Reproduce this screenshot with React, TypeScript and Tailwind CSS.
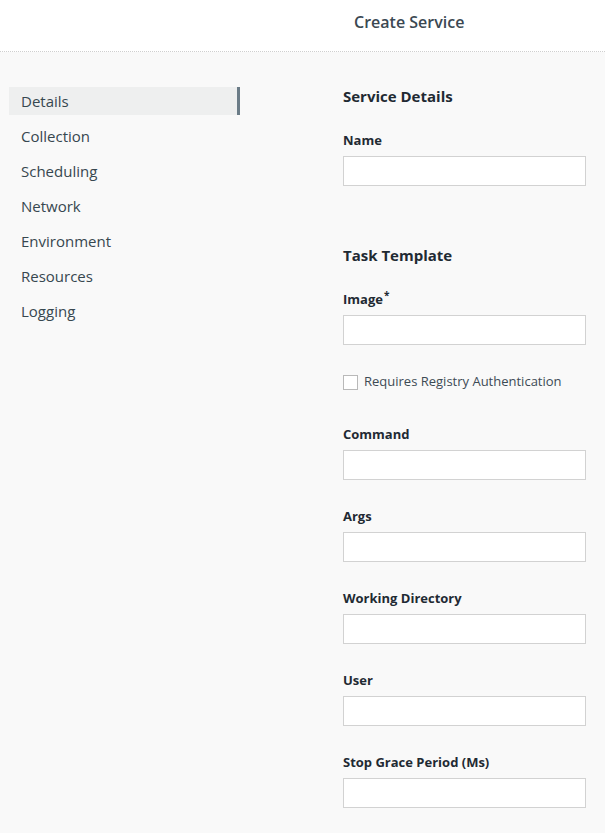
const navItems = [
  "Details",
  "Collection",
  "Scheduling",
  "Network",
  "Environment",
  "Resources",
  "Logging",
] as const;

const taskFields = [
  "Command",
  "Args",
  "Working Directory",
  "User",
  "Stop Grace Period (Ms)",
] as const;

function Field({ label, required }: { label: string; required?: boolean }) {
  return (
    <div className="flex flex-col">
      <label className="h-[18px] text-[13px] leading-[18px] font-bold text-[#1f2a33]">
        {label}
        {required && <sup className="ml-px text-[10px] font-bold">*</sup>}
      </label>
      <input
        type="text"
        className="mt-[7px] h-[30px] w-full border border-[#d2d2d2] bg-white px-2 text-[13px] outline-none"
      />
    </div>
  );
}

export default function App() {
  return (
    <div
      className="min-h-[833px] bg-[#f9f9f9] text-[#37474f]"
      style={{ fontFamily: '"Open Sans", "Noto Sans", sans-serif' }}
    >
      <header className="h-[52px] border-b border-dotted border-[#cfcfcf] bg-white pl-[354px] pt-[10px]">
        <h1 className="text-[16px] leading-[24px] font-semibold text-[#3b4852]">
          Create Service
        </h1>
      </header>

      <div className="flex">
        <nav className="mt-[35px] ml-[9px] flex w-[231px] flex-col gap-[7px]">
          {navItems.map((item, i) => (
            <a
              key={item}
              href="#"
              className={
                i === 0
                  ? "flex h-[28px] items-center border-r-[3px] border-[#6b7c87] bg-[#eeefef] pl-3 text-[15px] text-[#37474f]"
                  : "flex h-[28px] items-center pl-3 text-[15px] text-[#37474f]"
              }
            >
              {item}
            </a>
          ))}
        </nav>

        <main className="ml-[103px] w-[243px] pt-[34px] pb-6">
          <h2 className="text-[15px] leading-[20px] font-bold text-[#1f2a33]">
            Service Details
          </h2>
          <div className="mt-[25px]">
            <Field label="Name" />
          </div>

          <h2 className="mt-[59px] text-[15px] leading-[20px] font-bold text-[#1f2a33]">
            Task Template
          </h2>
          <div className="mt-[25px]">
            <Field label="Image" required />
          </div>

          <label className="mt-[29px] flex h-[16px] items-center gap-[6px] text-[13px] text-[#3d4b55]">
            <span className="h-[15px] w-[15px] border border-[#b9b9b9] bg-white" />
            Requires Registry Authentication
          </label>

          <div className="mt-[35px] flex flex-col gap-[27px]">
            {taskFields.map((f) => (
              <Field key={f} label={f} />
            ))}
          </div>
        </main>
      </div>
    </div>
  );
}
